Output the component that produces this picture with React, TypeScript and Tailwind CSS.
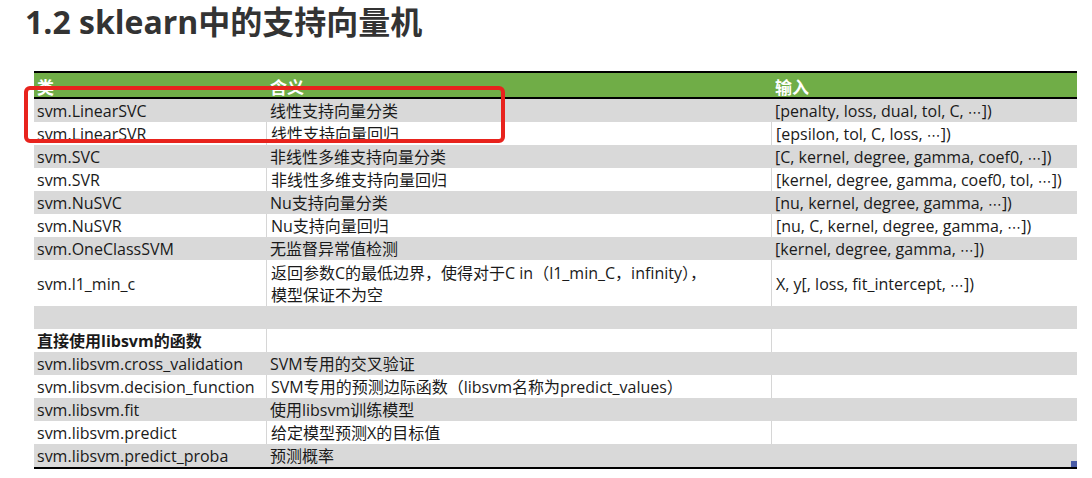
import React from "react";

type Row = {
  name: string;
  desc: string;
  input: string;
};

const svmRows: Row[] = [
  { name: "svm.LinearSVC", desc: "线性支持向量分类", input: "[penalty, loss, dual, tol, C, " },
  { name: "svm.LinearSVR", desc: "线性支持向量回归", input: "[epsilon, tol, C, loss, " },
  { name: "svm.SVC", desc: "非线性多维支持向量分类", input: "[C, kernel, degree, gamma, coef0, " },
  { name: "svm.SVR", desc: "非线性多维支持向量回归", input: "[kernel, degree, gamma, coef0, tol, " },
  { name: "svm.NuSVC", desc: "Nu支持向量分类", input: "[nu, kernel, degree, gamma, " },
  { name: "svm.NuSVR", desc: "Nu支持向量回归", input: "[nu, C, kernel, degree, gamma, " },
  { name: "svm.OneClassSVM", desc: "无监督异常值检测", input: "[kernel, degree, gamma, " },
];

const libsvmRows: Row[] = [
  { name: "svm.libsvm.cross_validation", desc: "SVM专用的交叉验证", input: "" },
  { name: "svm.libsvm.decision_function", desc: "SVM专用的预测边际函数（libsvm名称为predict_values）", input: "" },
  { name: "svm.libsvm.fit", desc: "使用libsvm训练模型", input: "" },
  { name: "svm.libsvm.predict", desc: "给定模型预测X的目标值", input: "" },
  { name: "svm.libsvm.predict_proba", desc: "预测概率", input: "" },
];

const grid = "grid grid-cols-[232px_505px_306px]";

// the "···" glyph, centered like in the excel sheet
function Dots() {
  return (
    <>
      <span className="font-['DejaVu_Sans',sans-serif] text-[14px]">⋯</span>])
    </>
  );
}

function Cell({ children, first, gray }: { children?: React.ReactNode; first?: boolean; gray: boolean }) {
  return (
    <div
      className={`h-full overflow-hidden whitespace-nowrap pt-[2px] leading-[21px] ${
        first ? "pl-[3px]" : "pl-[4px]"
      } ${!first && !gray ? "border-l border-[#d6d6d6]" : ""}`}
    >
      {children}
    </div>
  );
}

function TableRow({ row, gray, bold }: { row: Row; gray: boolean; bold?: boolean }) {
  return (
    <div className={`${grid} h-[23px] ${gray ? "bg-[#d9d9d9]" : "bg-white"}`}>
      <Cell first gray={gray}>
        {bold ? <span className="font-bold">{row.name}</span> : row.name}
      </Cell>
      <Cell gray={gray}>{row.desc}</Cell>
      <Cell gray={gray}>
        {row.input}
        {row.input && <Dots />}
      </Cell>
    </div>
  );
}

export default function App() {
  return (
    <div className="w-[1092px] h-[478px] bg-white overflow-hidden relative pt-[2px]">
      <h1 className="pl-[25px] h-[40px] leading-[40px] text-[32px] font-bold text-[#333333] font-['Open_Sans','Noto_Sans_CJK_SC',sans-serif]">
        1.2 sklearn中的支持向量机
      </h1>

      <div className="relative ml-[34px] mt-[29px] w-[1043px] text-[16px] text-[#1a1a1a] font-['Open_Sans','Noto_Sans_CJK_SC',sans-serif]">
        {/* header */}
        <div className="border-t-2 border-b-2 border-black">
          <div className={`${grid} h-[24px] bg-[#70ad47] text-white font-bold text-[17px] font-['Noto_Sans_CJK_SC',sans-serif] leading-[22px] pt-[3px]`}>
            <div className="pl-[3px]">类</div>
            <div className="pl-[4px]">含义</div>
            <div className="pl-[4px]">输入</div>
          </div>
        </div>

        {svmRows.map((r, i) => (
          <TableRow key={r.name} row={r} gray={i % 2 === 0} />
        ))}

        {/* two line row */}
        <div className={`${grid} h-[46px] bg-white`}>
          <div className="flex items-center pl-[3px] pt-[2px] whitespace-nowrap">svm.l1_min_c</div>
          <div className="border-l border-[#d6d6d6] pl-[4px] pt-[2px] leading-[22px] whitespace-nowrap">
            <div>返回参数C的最低边界，使得对于C in（l1_min_C，infinity），</div>
            <div>模型保证不为空</div>
          </div>
          <div className="flex items-center border-l border-[#d6d6d6] pl-[4px] pt-[2px] whitespace-nowrap">
            <span>
              X, y[, loss, fit_intercept, <Dots />
            </span>
          </div>
        </div>

        <div className="h-[23px] bg-[#d9d9d9]" />

        <TableRow row={{ name: "直接使用libsvm的函数", desc: "", input: "" }} gray={false} bold />

        <div className="border-b-2 border-black">
          {libsvmRows.map((r, i) => (
            <TableRow key={r.name} row={r} gray={i % 2 === 0} />
          ))}
        </div>

        {/* fill handle */}
        <div className="absolute right-0 bottom-[2px] w-[6px] h-[6px] bg-[#4a5ca6]" />

        {/* highlight box */}
        <div className="absolute left-[-10px] top-[15px] w-[481px] h-[57px] rounded-[6px] border-4 border-[#e8231d]" />
      </div>
    </div>
  );
}
